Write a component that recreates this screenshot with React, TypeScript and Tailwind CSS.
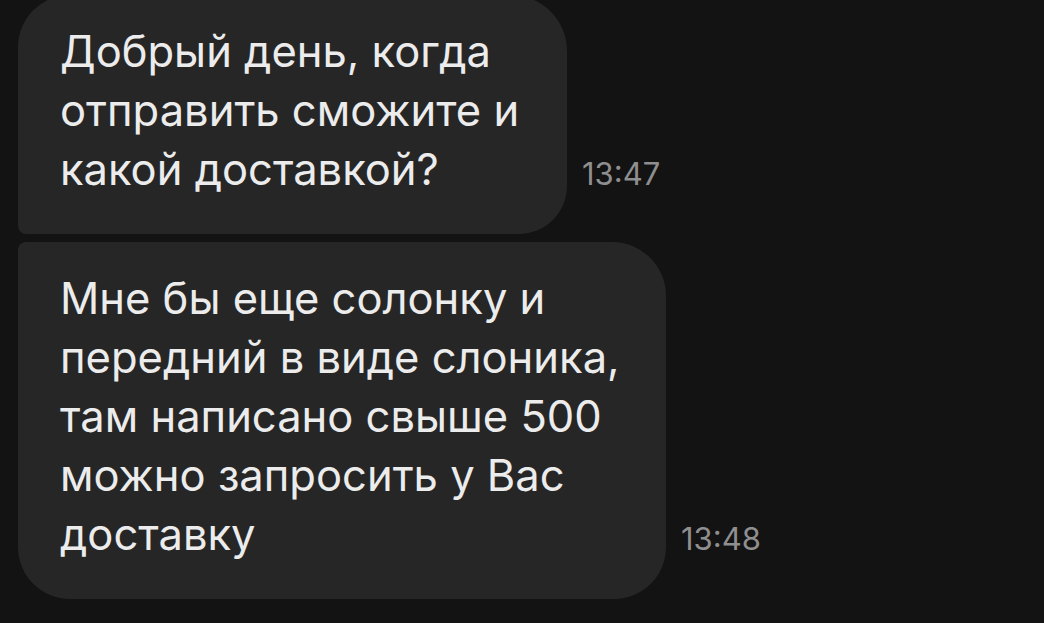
import React from "react";

type Msg = {
  lines: string[];
  time: string;
  width: string;
  corners: string;
};

const messages: Msg[] = [
  {
    lines: ["Добрый день, когда", "отправить сможите и", "какой доставкой?"],
    time: "13:47",
    width: "w-[549px]",
    corners: "rounded-tl-[52px] rounded-tr-[56px] rounded-br-[48px] rounded-bl-[8px]",
  },
  {
    lines: [
      "Мне бы еще солонку и",
      "передний в виде слоника,",
      "там написано свыше 500",
      "можно запросить у Вас",
      "доставку",
    ],
    time: "13:48",
    width: "w-[648px]",
    corners: "rounded-tl-[8px] rounded-tr-[54px] rounded-br-[52px] rounded-bl-[52px]",
  },
];

function Bubble({ msg }: { msg: Msg }) {
  return (
    <div className="flex items-end gap-[15px]">
      <div
        className={`${msg.width} ${msg.corners} shrink-0 bg-[#262626] pl-[42px] pr-[30px] pt-[27px] pb-[35px] text-[43.5px] leading-[59px] text-[#ececec]`}
      >
        {msg.lines.map((l, i) => (
          <div key={i} className="whitespace-nowrap">
            {l}
          </div>
        ))}
      </div>
      <div className="pb-[45px] text-[31px] leading-[30px] text-[#8f8f8f]">{msg.time}</div>
    </div>
  );
}

export default function App() {
  return (
    <div
      className="h-[623px] w-[1044px] overflow-hidden bg-[#131313] pl-[18px]"
      style={{ fontFamily: "Inter, 'Noto Sans', sans-serif" }}
    >
      <div className="-mt-[5px] flex flex-col gap-[8px]">
        {messages.map((m) => (
          <Bubble key={m.time} msg={m} />
        ))}
      </div>
    </div>
  );
}
